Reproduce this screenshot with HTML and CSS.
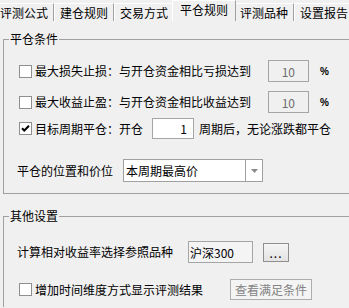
FILE: index.html
```html
<!DOCTYPE html>
<html>
<head>
<meta charset="utf-8">
<link rel="stylesheet" href="styles.css">
</head>
<body>
<div class="tabs">
  <div class="tab first">评测公式</div>
  <div class="tab">建仓规则</div>
  <div class="tab">交易方式</div>
  <div class="tab active">平仓规则</div>
  <div class="tab">评测品种</div>
  <div class="tab">设置报告</div>
</div>
<div class="panel">
  <fieldset class="group g1">
    <legend>平仓条件</legend>
    <div class="row cbrow r1">
      <span class="cb"></span><span class="lbl">最大损失止损：与开仓资金相比亏损达到</span>
      <span class="edit disabled pctedit">10</span><span class="pct">%</span>
    </div>
    <div class="row cbrow r2">
      <span class="cb"></span><span class="lbl">最大收益止盈：与开仓资金相比收益达到</span>
      <span class="edit disabled pctedit">10</span><span class="pct">%</span>
    </div>
    <div class="row cbrow r3">
      <span class="cb checked"><svg width="11" height="11" viewBox="0 0 11 11"><path d="M2 5.2 L4.3 7.5 L9 2.8" fill="none" stroke="#000" stroke-width="2"/></svg></span><span class="lbl">目标周期平仓：开仓</span>
      <span class="edit numedit">1</span><span class="lbl after">周期后，无论涨跌都平仓</span>
    </div>
    <div class="row lblrow r4">
      <span class="lbl">平仓的位置和价位</span>
      <span class="combo"><span class="combo-text">本周期最高价</span><span class="combo-btn"><svg width="7" height="4" viewBox="0 0 7 4"><path d="M0 0 H7 L3.5 4 Z" fill="#8a8a8a"/></svg></span></span>
    </div>
  </fieldset>
  <fieldset class="group g2">
    <legend>其他设置</legend>
    <div class="row lblrow r5">
      <span class="lbl">计算相对收益率选择参照品种</span>
      <span class="edit readonly refedit">沪深300</span>
      <span class="btn dots">...</span>
    </div>
    <div class="row cbrow r6">
      <span class="cb"></span><span class="lbl">增加时间维度方式显示评测结果</span>
      <span class="btn disabled viewbtn">查看满足条件</span>
    </div>
  </fieldset>
</div>
</body>
</html>
```

FILE: styles.css
```css
html, body {
  margin: 0;
  padding: 0;
}
body {
  width: 349px;
  height: 308px;
  overflow: hidden;
  background: #f0f0f0;
  font-family: "Noto Sans CJK SC", "Noto Sans", sans-serif;
  font-size: 12px;
  color: #000;
}

/* tabs */
.tabs {
  display: flex;
  align-items: flex-end;
  height: 21px;
  overflow: hidden;
}
.tab {
  box-sizing: border-box;
  flex: none;
  height: 18px;
  padding: 1px 5px 0;
  line-height: 16px;
  border-top: 1px solid #fff;
  border-left: 1px solid #fff;
  border-right: 1px solid #a0a0a0;
  white-space: nowrap;
  background: #f0f0f0;
}
.tab.first {
  border-left: none;
  padding-left: 0;
}
.tab.active {
  position: relative;
  z-index: 1;
  height: 21px;
  margin: 0 -2px;
  padding: 1px 7px 0;
}

/* panel & group boxes */
.panel {
  padding-top: 12px;
}
.group {
  margin: 0 0 0 3px;
  padding: 0 0 11px 5px;
  border: 1px solid #a0a0a0;
  border-right: none;
  width: 340px;
  min-width: 0;
}
.group legend {
  padding: 0 1px;
  font-size: 12px;
  line-height: 12px;
  height: 12px;
}
.g2 {
  margin-top: 16px;
  border-bottom: none;
  padding-bottom: 7px;
}

.row {
  display: flex;
  align-items: center;
  white-space: nowrap;
}
.cbrow {
  padding-left: 10px;
}
.lblrow {
  padding-left: 8px;
}
.r1 { margin-top: 15px; height: 22px; }
.r2 { margin-top: 9px; height: 22px; }
.r3 { margin-top: 5px; height: 21px; }
.r4 { margin-top: 20px; height: 23px; }
.r5 { margin-top: 19px; height: 22px; }
.r6 { margin-top: 16px; height: 21px; }

.lbl {
  line-height: 14px;
}

/* checkbox */
.cb {
  box-sizing: border-box;
  flex: none;
  width: 13px;
  height: 13px;
  margin-right: 3px;
  border: 1px solid #8e8f8f;
  background: #fff;
  display: flex;
  align-items: center;
  justify-content: center;
}

/* edits */
.edit {
  box-sizing: border-box;
  flex: none;
  display: flex;
  align-items: center;
  justify-content: flex-end;
  border: 1px solid #a5a5a5;
  background: #fff;
  height: 100%;
}
.edit.disabled {
  background: #f0f0f0;
  color: #6d6d6d;
}
.pctedit {
  width: 41px;
  margin-left: 17px;
  padding-right: 13px;
}
.pct {
  margin-left: 11px;
  font-family: "Liberation Sans", sans-serif;
  font-size: 10px;
  font-weight: bold;
}
.numedit {
  width: 42px;
  margin-left: 9px;
  padding-right: 6px;
}
.after {
  margin-left: 5px;
}
.refedit {
  width: 65px;
  margin-left: 15px;
  justify-content: flex-start;
  padding-left: 1px;
  background: #f4f4f4;
}

/* combo */
.combo {
  box-sizing: border-box;
  flex: none;
  display: flex;
  width: 140px;
  height: 23px;
  margin-left: 10px;
  border: 1px solid #a0a0a0;
  background: #fff;
}
.combo-text {
  flex: 1;
  display: flex;
  align-items: center;
  padding-left: 2px;
}
.combo-btn {
  width: 16px;
  border-left: 1px solid #a0a0a0;
  display: flex;
  align-items: center;
  justify-content: center;
}

/* buttons */
.btn {
  box-sizing: border-box;
  flex: none;
  display: flex;
  align-items: center;
  justify-content: center;
  border: 1px solid #8f8f8f;
  background: linear-gradient(#f5f5f5, #e3e3e3);
}
.dots {
  width: 26px;
  height: 19px;
  margin-left: 10px;
  letter-spacing: 1px;
  align-items: flex-end;
  line-height: 12px;
  padding-bottom: 2px;
}
.btn.disabled {
  background: #f4f4f4;
  border-color: #adadad;
  color: #838383;
}
.viewbtn {
  width: 82px;
  height: 21px;
  margin-left: 27px;
}
```
